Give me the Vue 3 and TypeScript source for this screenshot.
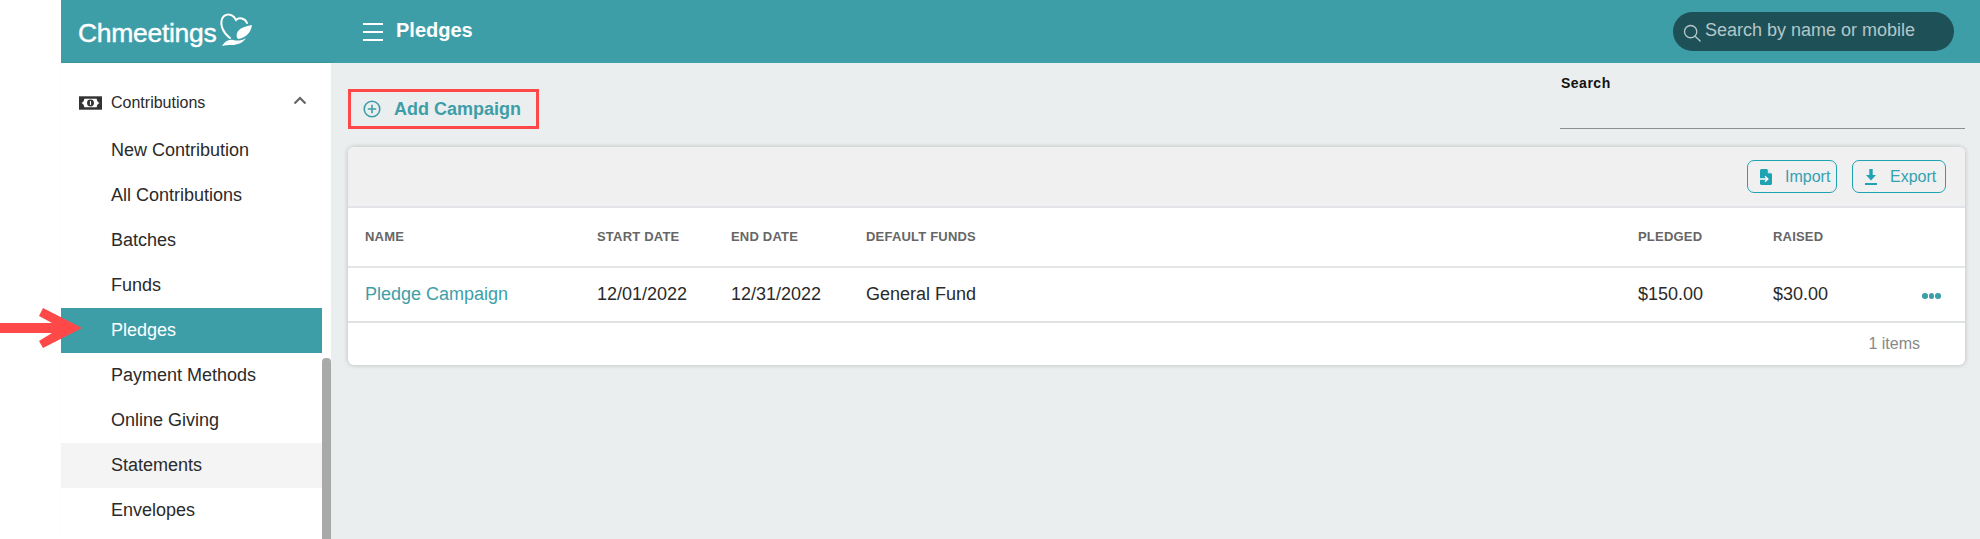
<script setup lang="ts">
const subItems = [
  'New Contribution',
  'All Contributions',
  'Batches',
  'Funds',
  'Pledges',
  'Payment Methods',
  'Online Giving',
  'Statements',
  'Envelopes',
]

const headers = ['NAME', 'START DATE', 'END DATE', 'DEFAULT FUNDS', 'PLEDGED', 'RAISED']
</script>

<template>
  <div class="page">
    <header class="topbar">
      <div class="logo">
        <span class="logo-text">Chmeetings</span>
        <svg class="logo-mark" viewBox="0 0 33 33" fill="none">
          <path d="M11 25C4 20 1 12 3 6c2-5 8-6 12-2l2 3c3-3 9-2 11 3" stroke="#fff" stroke-width="2" stroke-linecap="round" />
          <path d="M33 12c-6 1-13 3-15 8-1 3 0 5 1 6 7-1 13-6 14-14Z" fill="#fff" />
          <path d="M3 33c3-5 7-7 11-6 4 1 9 1 13-2-3 5-9 7-14 7-4 0-7 0-10 1Z" fill="#fff" />
        </svg>
      </div>
      <button class="menu-btn" aria-label="Menu">
        <span></span><span></span><span></span>
      </button>
      <h1 class="page-title">Pledges</h1>
      <div class="global-search">
        <svg class="search-icon" viewBox="0 0 20 20" fill="none" stroke="#b4c6c8" stroke-width="1.5">
          <circle cx="8.5" cy="8.5" r="6.8" />
          <path d="M13.5 13.5 19 19" stroke-linecap="round" />
        </svg>
        <span>Search by name or mobile</span>
      </div>
    </header>

    <div class="body">
      <aside class="sidebar">
        <nav class="nav">
          <div class="nav-group">
            <svg class="money-icon" viewBox="0 0 24 14">
              <rect width="24" height="14" fill="#333" />
              <path d="M2.500 7c2-1 3-2.500 3-4.500h13c0 2 1 3.500 3 4.500-2 1-3 2.500-3 4.500h-13c0-2-1-3.500-3-4.500Z" fill="#fff" />
              <circle cx="12" cy="7" r="3.600" fill="#333" />
              <rect x="11.400" y="5" width="1.200" height="4" fill="#fff" />
            </svg>
            <span class="nav-group-label">Contributions</span>
            <svg class="chevron" viewBox="0 0 14 9" fill="none" stroke="#666" stroke-width="2.200">
              <path d="M1.500 7.500 7 2l5.500 5.500" />
            </svg>
          </div>
          <a
            v-for="item in subItems"
            :key="item"
            class="nav-item"
            :class="{ active: item === 'Pledges', hovered: item === 'Statements' }"
          >{{ item }}</a>
        </nav>
        <div class="scrollbar"><div class="thumb"></div></div>
      </aside>

      <main class="content">
        <div class="actions">
          <button class="add-btn">
            <svg viewBox="0 0 18 18" fill="none" stroke="#3e9ea8" stroke-width="1.600">
              <circle cx="9" cy="9" r="7.800" />
              <path d="M9 4.800v8.400M4.800 9h8.400" />
            </svg>
            <span>Add Campaign</span>
          </button>
          <div class="search-field">
            <label>Search</label>
          </div>
        </div>

        <section class="card">
          <div class="toolbar">
            <button class="tool-btn import">
              <svg viewBox="0 0 12 16">
                <path d="M0 1.500C0 .7.700 0 1.500 0H7l5 5v9.500c0 .8-.7 1.500-1.500 1.500h-9C.7 16 0 15.300 0 14.500Z" fill="#1fa3b3" />
                <path d="M7.800 0v4.200H12Z" fill="#d5edf0" />
                <path d="M0 10h7M5 7.200 7.800 10 5 12.800" fill="none" stroke="#fff" stroke-width="1.400" />
              </svg>
              Import
            </button>
            <button class="tool-btn export">
              <svg viewBox="0 0 12 16" fill="#1fa3b3">
                <path d="M4.300 0h3.400v6h3.300L6 11.500 1 6h3.300Z" />
                <rect y="14" width="12" height="2" />
              </svg>
              Export
            </button>
          </div>

          <div class="row head">
            <div v-for="h in headers" :key="h">{{ h }}</div>
          </div>
          <div class="row data">
            <div class="link">Pledge Campaign</div>
            <div>12/01/2022</div>
            <div>12/31/2022</div>
            <div>General Fund</div>
            <div>$150.00</div>
            <div>$30.00</div>
            <div class="dots"><i></i><i></i><i></i></div>
          </div>
          <div class="card-foot">1 items</div>
        </section>
      </main>
    </div>

    <!-- annotation drawn over the screenshot -->
    <svg class="arrow" viewBox="0 0 82 40" fill="#ff4848">
      <path d="M0 15h52L39 8l4-8 39 20-39 20-4-7 13-8H0Z" />
    </svg>
  </div>
</template>

<style>
html,
body {
  margin: 0;
  background: #fff;
}
</style>

<style scoped>
.page {
  position: relative;
  width: 1980px;
  height: 539px;
  overflow: hidden;
  padding-left: 61px;
  box-sizing: border-box;
  display: flex;
  flex-direction: column;
  font-family: "Liberation Sans", Arial, sans-serif;
  color: #2a2a2a;
}

.topbar {
  height: 63px;
  flex: none;
  background: #3e9ea8;
  display: flex;
  align-items: center;
  color: #fff;
}

.logo {
  width: 302px;
  padding-left: 17px;
  box-sizing: border-box;
  display: flex;
  align-items: center;
}

.logo-text {
  font-size: 26.500px;
  -webkit-text-stroke: 0.4px #fff;
  letter-spacing: -0.3px;
  margin-top: 3px;
}

.logo-mark {
  width: 33px;
  height: 33px;
  margin-top: -5px;
  margin-left: 3px;
}

.menu-btn {
  width: 20px;
  padding: 0;
  border: 0;
  background: none;
  display: flex;
  flex-direction: column;
  gap: 6px;
}

.menu-btn span {
  display: block;
  height: 2px;
  background: #fff;
}

.page-title {
  margin: -3px 0 0 13px;
  font-size: 20px;
  font-weight: 700;
}

.global-search {
  margin-left: auto;
  margin-right: 26px;
  width: 281px;
  height: 39px;
  border-radius: 20px;
  background: #1e5157;
  box-sizing: border-box;
  padding-left: 10px;
  display: flex;
  align-items: center;
  gap: 4px;
  color: #b4c6c8;
  font-size: 18px;
}

.global-search span {
  margin-top: -2px;
}

.search-icon {
  width: 18px;
  height: 18px;
  margin-top: 2px;
}

.body {
  flex: 1;
  min-height: 0;
  display: flex;
}

.sidebar {
  width: 270px;
  flex: none;
  display: flex;
  background: #fff;
  box-shadow: 1px 0 2px rgb(0 0 0 / 0.15);
}

.nav {
  width: 261px;
  flex: none;
  padding-top: 17px;
}

.nav-group {
  height: 48px;
  display: flex;
  align-items: center;
  padding-left: 18px;
  padding-right: 15px;
  padding-bottom: 3px;
  box-sizing: border-box;
}

.money-icon {
  width: 23px;
  height: 14px;
  margin-right: 9px;
}

.nav-group-label {
  font-size: 16px;
  flex: 1;
}

.chevron {
  width: 14px;
  height: 9px;
  margin-top: -4px;
}

.nav-item {
  display: flex;
  align-items: center;
  height: 45px;
  padding-left: 50px;
  font-size: 18px;
  color: #2a2a2a;
}

.nav-item.active {
  background: #3e9ea8;
  color: #fff;
}

.nav-item.hovered {
  background: #f4f4f4;
}

.scrollbar {
  flex: 1;
  padding-top: 295px;
}

.thumb {
  height: 200px;
  background: #a9a9a9;
  border-radius: 4px 4px 0 0;
}

.content {
  flex: 1;
  min-width: 0;
  background: #ebeeef;
  padding: 0 15px 0 17px;
}

.actions {
  height: 84px;
  display: flex;
  justify-content: space-between;
}

.add-btn {
  margin-top: 26px;
  width: 191px;
  height: 40px;
  box-sizing: border-box;
  border: 3px solid #ff4848;
  background: none;
  padding: 0 0 0 12px;
  display: flex;
  align-items: center;
  gap: 13px;
  color: #3e9ea8;
  font-family: inherit;
  font-size: 18px;
  font-weight: 700;
}

.add-btn svg {
  width: 18px;
  height: 18px;
}

.search-field {
  width: 405px;
  height: 65px;
  display: flex;
  flex-direction: column;
  border-bottom: 1px solid #8a8f92;
}

.search-field label {
  margin-top: 12px;
  padding-left: 1px;
  font-size: 14px;
  font-weight: 700;
  letter-spacing: 0.5px;
  color: #111;
}

.card {
  background: #fff;
  border-radius: 6px;
  overflow: hidden;
  box-shadow: 0 0 5px rgb(0 0 0 / 0.22);
}

.toolbar {
  height: 61px;
  box-sizing: border-box;
  background: #f0f0f1;
  border-bottom: 2px solid #e2e4e8;
  display: flex;
  align-items: center;
  justify-content: flex-end;
  gap: 15px;
  padding-right: 19px;
}

.tool-btn {
  height: 33px;
  box-sizing: border-box;
  padding: 0 0 0 12px;
  border: 1px solid #1fa3b3;
  border-radius: 7px;
  background: none;
  display: flex;
  align-items: center;
  gap: 13px;
  color: #35a1af;
  font-family: inherit;
  font-size: 16px;
}

.tool-btn.import {
  width: 90px;
}

.tool-btn.export {
  width: 94px;
}

.tool-btn svg {
  width: 12px;
  height: 16px;
}

.row {
  display: grid;
  grid-template-columns: 232px 134px 135px 772px 135px 149px 1fr;
  align-items: center;
  padding-left: 17px;
  box-sizing: border-box;
}

.head {
  height: 60px;
  padding-bottom: 2px;
  border-bottom: 2px solid #e4e6e8;
  font-size: 13px;
  letter-spacing: 0.2px;
  font-weight: 700;
  color: #666;
}

.data {
  height: 55px;
  border-bottom: 2px solid #dfe1e3;
  font-size: 18px;
}

.link {
  color: #3e9ea8;
}

.dots {
  display: flex;
  gap: 1px;
  margin-top: 3px;
}

.dots i {
  width: 5.500px;
  height: 5.500px;
  border-radius: 50%;
  background: #3e9ea8;
}

.card-foot {
  height: 42px;
  display: flex;
  align-items: center;
  justify-content: flex-end;
  padding-right: 45px;
  font-size: 16px;
  color: #888;
}

.arrow {
  position: absolute;
  left: 0;
  top: 308px;
  width: 82px;
  height: 40px;
}
</style>
